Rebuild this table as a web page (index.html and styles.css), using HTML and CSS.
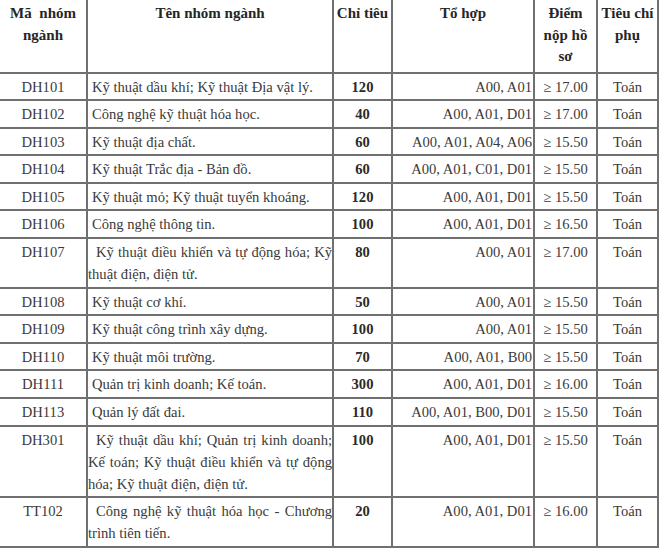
FILE: index.html
```html
<!DOCTYPE html>
<html lang="vi">
<head>
<meta charset="utf-8">
<title>Chỉ tiêu tuyển sinh</title>
<link rel="stylesheet" href="styles.css">
</head>
<body>
<table class="grid">
  <colgroup>
    <col class="c-code"><col class="c-name"><col class="c-quota"><col class="c-combo"><col class="c-score"><col class="c-crit">
  </colgroup>
  <thead>
    <tr>
      <th class="h-code">Mã nhóm ngành</th>
      <th>Tên nhóm ngành</th>
      <th>Chỉ tiêu</th>
      <th>Tổ hợp</th>
      <th class="h-narrow">Điểm nộp hồ sơ</th>
      <th class="h-narrow">Tiêu chí phụ</th>
    </tr>
  </thead>
  <tbody>
    <tr><td class="code">DH101</td><td class="name">Kỹ thuật dầu khí; Kỹ thuật Địa vật lý.</td><td class="quota">120</td><td class="combo">A00, A01</td><td class="score">≥ 17.00</td><td class="crit">Toán</td></tr>
    <tr><td class="code">DH102</td><td class="name">Công nghệ kỹ thuật hóa học.</td><td class="quota">40</td><td class="combo">A00, A01, D01</td><td class="score">≥ 17.00</td><td class="crit">Toán</td></tr>
    <tr><td class="code">DH103</td><td class="name">Kỹ thuật địa chất.</td><td class="quota">60</td><td class="combo">A00, A01, A04, A06</td><td class="score">≥ 15.50</td><td class="crit">Toán</td></tr>
    <tr><td class="code">DH104</td><td class="name">Kỹ thuật Trắc địa - Bản đồ.</td><td class="quota">60</td><td class="combo">A00, A01, C01, D01</td><td class="score">≥ 15.50</td><td class="crit">Toán</td></tr>
    <tr><td class="code">DH105</td><td class="name">Kỹ thuật mỏ; Kỹ thuật tuyển khoáng.</td><td class="quota">120</td><td class="combo">A00, A01, D01</td><td class="score">≥ 15.50</td><td class="crit">Toán</td></tr>
    <tr><td class="code">DH106</td><td class="name">Công nghệ thông tin.</td><td class="quota">100</td><td class="combo">A00, A01, D01</td><td class="score">≥ 16.50</td><td class="crit">Toán</td></tr>
    <tr><td class="code">DH107</td><td class="name lead">Kỹ thuật điều khiển và tự động hóa; Kỹ thuật điện, điện tử.</td><td class="quota">80</td><td class="combo">A00, A01</td><td class="score">≥ 17.00</td><td class="crit">Toán</td></tr>
    <tr><td class="code">DH108</td><td class="name">Kỹ thuật cơ khí.</td><td class="quota">50</td><td class="combo">A00, A01</td><td class="score">≥ 15.50</td><td class="crit">Toán</td></tr>
    <tr><td class="code">DH109</td><td class="name">Kỹ thuật công trình xây dựng.</td><td class="quota">100</td><td class="combo">A00, A01</td><td class="score">≥ 15.50</td><td class="crit">Toán</td></tr>
    <tr><td class="code">DH110</td><td class="name">Kỹ thuật môi trường.</td><td class="quota">70</td><td class="combo">A00, A01, B00</td><td class="score">≥ 15.50</td><td class="crit">Toán</td></tr>
    <tr><td class="code">DH111</td><td class="name">Quản trị kinh doanh; Kế toán.</td><td class="quota">300</td><td class="combo">A00, A01, D01</td><td class="score">≥ 16.00</td><td class="crit">Toán</td></tr>
    <tr><td class="code">DH113</td><td class="name">Quản lý đất đai.</td><td class="quota">110</td><td class="combo">A00, A01, B00, D01</td><td class="score">≥ 15.50</td><td class="crit">Toán</td></tr>
    <tr><td class="code">DH301</td><td class="name lead">Kỹ thuật dầu khí; Quản trị kinh doanh; Kế toán; Kỹ thuật điều khiển và tự động hóa; Kỹ thuật điện, điện tử.</td><td class="quota">100</td><td class="combo">A00, A01, D01</td><td class="score">≥ 15.50</td><td class="crit">Toán</td></tr>
    <tr><td class="code">TT102</td><td class="name lead">Công nghệ kỹ thuật hóa học - Chương trình tiên tiến.</td><td class="quota">20</td><td class="combo">A00, A01, D01</td><td class="score">≥ 16.00</td><td class="crit">Toán</td></tr>
  </tbody>
</table>
</body>
</html>
```

FILE: styles.css
```css
html, body {
  margin: 0;
  padding: 0;
  background: #ffffff;
}

body {
  font-family: "Liberation Serif", "Times New Roman", serif;
  color: #3a3a3a;
  overflow: hidden;
}

.grid {
  border-collapse: collapse;
  table-layout: fixed;
  width: 661px;
  margin: -2px 0 0 -2px;
  font-size: 14.6px;
}

.c-code { width: 88px; }
.c-name { width: 246px; }
.c-quota { width: 59px; }
.c-combo { width: 142px; }
.c-score { width: 63px; }
.c-crit { width: 61px; }

.grid th,
.grid td {
  border: 2px solid #707070;
  vertical-align: top;
}

.grid th {
  font-size: 15px;
  font-weight: bold;
  color: #262626;
  text-align: center;
  line-height: 21.5px;
  padding: 3px 2px 4px;
  height: 64px;
}

.grid th.h-code {
  padding: 3px 10px 4px;
  text-align: justify;
  text-align-last: center;
}

.grid td {
  line-height: 22px;
  padding: 2px 0 1.6px;
}

.code {
  text-align: center;
}

.name {
  text-align: justify;
  text-indent: 4px;
}

.name.lead {
  text-indent: 8px;
}

.quota {
  text-align: center;
  font-weight: bold;
  color: #2a2a2a;
}

.combo {
  text-align: right;
  padding-right: 1px !important;
}

.score {
  text-align: center;
}

.crit {
  text-align: center;
}
```
